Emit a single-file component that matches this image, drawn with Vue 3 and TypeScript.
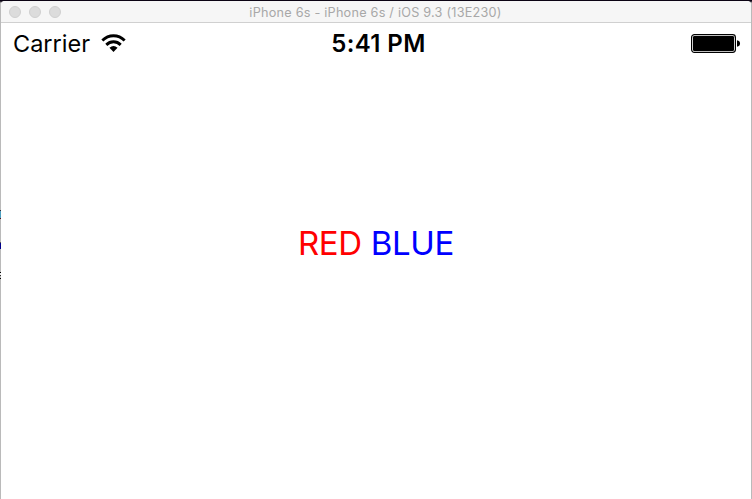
<script setup lang="ts">
const windowTitle: string = 'iPhone 6s - iPhone 6s / iOS 9.3 (13E230)'
const controls: string[] = ['close', 'minimize', 'zoom']
const carrier: string = 'Carrier'
const time: string = '5:41 PM'
</script>

<template>
  <div class="desktop">
    <main class="window">
      <header class="titlebar">
        <div class="controls">
          <span v-for="control in controls" :key="control" class="control"></span>
        </div>
        <span class="title">{{ windowTitle }}</span>
      </header>
      <div class="statusbar">
        <div class="network">
          <span class="carrier">{{ carrier }}</span>
          <svg class="wifi" width="25" height="20" viewBox="0 0 26 20" preserveAspectRatio="none" fill="none" stroke="#000" stroke-width="3">
            <path d="M1.4 6.5C8 .1 18 .1 24.6 6.5" />
            <path d="M5.5 10.9C9.8 6.8 16.2 6.8 20.5 10.9" />
            <path d="M8.8 13.8Q13 10.2 17.2 13.8L13 18Z" fill="#000" stroke="none" />
          </svg>
        </div>
        <span class="time">{{ time }}</span>
        <svg class="battery" width="50" height="20" viewBox="0 0 50 20">
          <rect x=".6" y=".6" width="43.8" height="17.8" rx="2.8" fill="#fff" stroke="#000" stroke-width="1.2" />
          <rect x="2" y="2" width="41" height="15" rx="1.2" fill="#000" />
          <path d="M46 6.2Q49 6.8 49 9.5T46 12.8Z" fill="#000" />
        </svg>
      </div>
      <p class="label"><span class="red">RED</span> <span class="blue">BLUE</span></p>
    </main>
    <div class="backdrop"></div>
  </div>
</template>

<style>
body {
  margin: 0;
  overflow: hidden;
}
</style>

<style scoped>
.desktop {
  position: relative;
  box-sizing: border-box;
  width: 752px;
  height: 499px;
  padding: 1px 1px 0;
  background: linear-gradient(#0b0313 0 1px, #bababa 3px);
  font-family: Inter, Roboto, sans-serif;
}
.window {
  height: 498px;
  overflow: hidden;
  border-radius: 4px 4px 0 0;
  background: #fff;
}
.titlebar {
  display: grid;
  grid-template-columns: 62px 1fr 62px;
  align-items: center;
  box-sizing: border-box;
  height: 22px;
  border-bottom: 1px solid #d0d0d0;
  background: #f6f6f6;
}
.controls {
  display: flex;
  gap: 8px;
  padding-left: 8px;
}
.control {
  box-sizing: border-box;
  width: 12px;
  height: 12px;
  border: 1px solid #d0d0d0;
  border-radius: 50%;
  background: #dcdcdc;
}
.title {
  justify-self: center;
  padding: 2px 1px 0 0;
  color: #a8a8a8;
  font-size: 12.7px;
  letter-spacing: 0.22px;
  line-height: 19px;
  white-space: nowrap;
}
.statusbar {
  display: grid;
  grid-template-columns: 1fr auto 1fr;
  align-items: center;
  height: 41px;
  padding: 0 10px 0 12px;
  color: #000;
  font-size: 24px;
  line-height: 30px;
}
.network {
  display: flex;
  align-items: center;
  gap: 11px;
}
.carrier {
  font-size: 23.5px;
}
.time {
  padding-left: 3px;
  font-weight: 600;
  letter-spacing: 0.38px;
  white-space: nowrap;
}
.battery {
  justify-self: end;
}
.label {
  margin: 159px 0 0;
  font-size: 33px;
  letter-spacing: -0.35px;
  line-height: 40px;
  text-align: center;
}
.red {
  color: #f00;
}
.blue {
  color: #00f;
}
.backdrop {
  position: absolute;
  top: 210px;
  left: 0;
  width: 1px;
  height: 70px;
  background: linear-gradient(
    #30303a 0 1px, #4c9fc0 1px 8px, #4b1420 8px 9px, #bababa 9px 32px,
    #555 32px 33px, #00008b 33px 39px, #bababa 39px 62px,
    #000 62px 63px, #eee 63px 65px, #333 65px 66px, #bababa 66px 68px, #000 68px 69px, #bababa 69px
  );
}
</style>
